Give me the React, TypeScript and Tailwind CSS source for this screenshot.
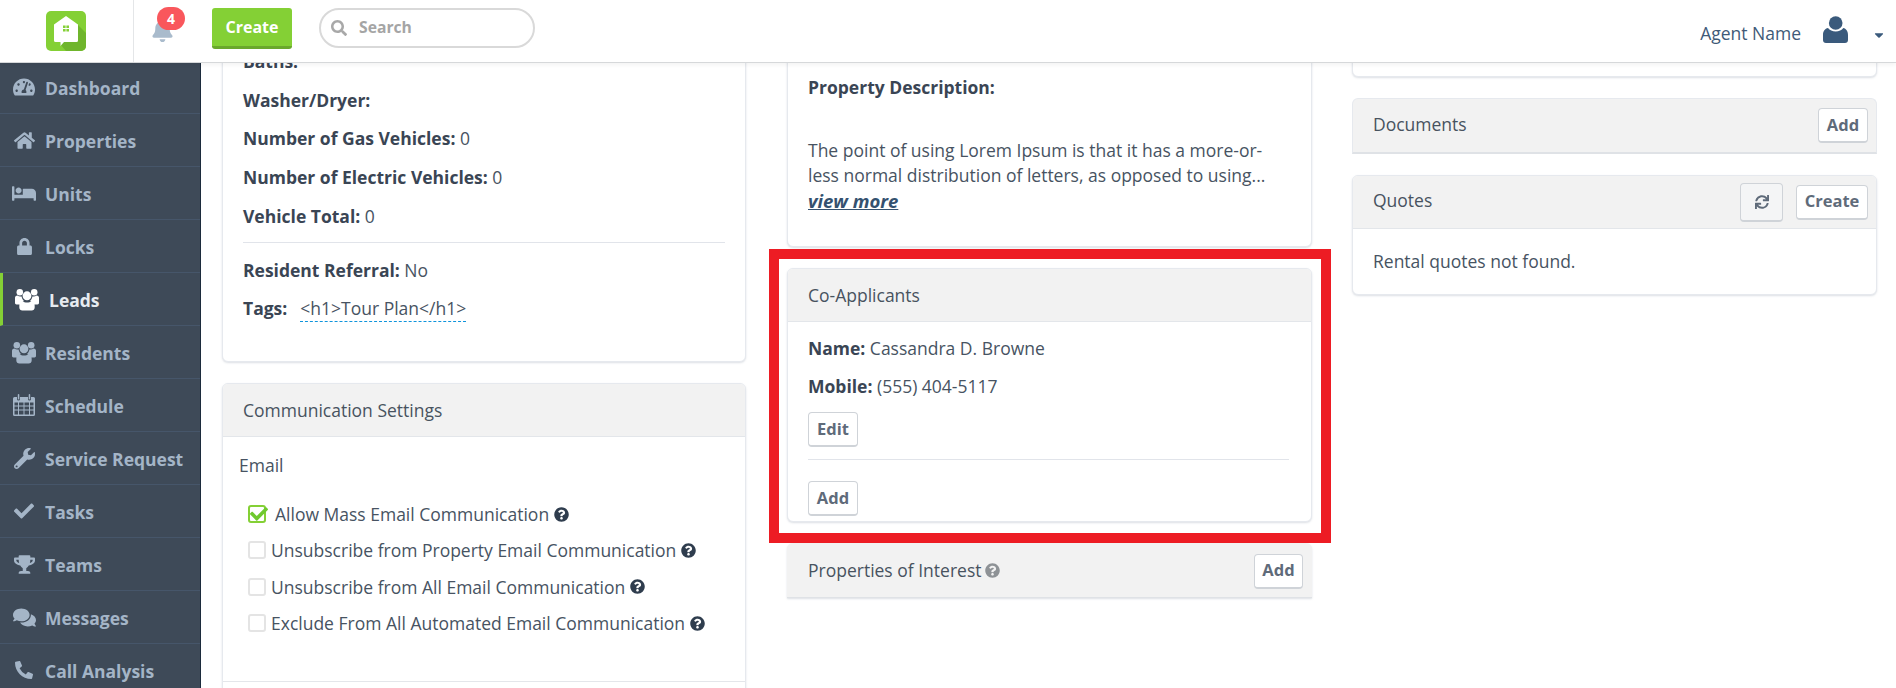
import React from "react";
import {
  FaTachometerAlt, FaHome, FaBed, FaLock, FaWrench, FaCheck, FaTrophy, FaComments,
  FaPhoneAlt, FaBell, FaSearch, FaCaretDown, FaQuestionCircle, FaSync,
} from "react-icons/fa";

function UsersIcon({ size = 25 }: { size?: number; className?: string }) {
  return (
    <svg width={size} height={size * 0.92} viewBox="0 0 25 23" fill="currentColor">
      <circle cx="5" cy="4" r="3.4" />
      <circle cx="20" cy="4" r="3.4" />
      <path d="M0 9.5 a2.5 2.5 0 0 1 2.5-2.2 c1 .8 2 1.2 3 1.2 .6 0 1 0 1.4-.1 .2 2 1.2 3.6 2.6 4.7 -2 .6-3.3 2-3.8 3.6 H1.6 C.6 16.7 0 16 0 15 Z" />
      <path d="M25 9.5 a2.5 2.5 0 0 0 -2.5-2.2 c-1 .8-2 1.2-3 1.2 -.6 0-1 0-1.4-.1 -.2 2-1.2 3.6-2.6 4.7 2 .6 3.3 2 3.8 3.6 h4.1 c1 0 1.6-.7 1.6-1.7 Z" />
      <circle cx="12.5" cy="7.6" r="4.6" />
      <path d="M7.8 13 c1.2 1 2.9 1.6 4.7 1.6 s3.5-.6 4.7-1.6 c2.3.4 3.3 2.4 3.3 5 v1.8 c0 2-1.4 3.2-3.1 3.2 H7.6 C5.9 23 4.5 21.8 4.5 19.8 V18 c0-2.6 1-4.6 3.3-5 Z" />
    </svg>
  );
}

function CalendarIcon({ size = 22 }: { size?: number; className?: string }) {
  return (
    <svg width={size} height={size} viewBox="0 0 22 22" fill="currentColor">
      <path fillRule="evenodd" d="M1.5 3 H4 V5 a1.5 1.5 0 0 0 3 0 V3 h8 v2 a1.5 1.5 0 0 0 3 0 V3 h2.5 A1.5 1.5 0 0 1 22 4.5 V20.5 A1.5 1.5 0 0 1 20.5 22 H1.5 A1.5 1.5 0 0 1 0 20.5 V4.5 A1.5 1.5 0 0 1 1.5 3 Z M1.5 8.5 v3 h3.5 v-3 Z M6 8.5 v3 h4.5 v-3 Z M11.5 8.5 v3 h4.5 v-3 Z M17 8.5 v3 h3.5 v-3 Z M1.5 12.5 v3 h3.5 v-3 Z M6 12.5 v3 h4.5 v-3 Z M11.5 12.5 v3 h4.5 v-3 Z M17 12.5 v3 h3.5 v-3 Z M1.5 16.5 v4 h3.5 v-4 Z M6 16.5 v4 h4.5 v-4 Z M11.5 16.5 v4 h4.5 v-4 Z M17 16.5 v4 h3.5 v-4 Z" />
      <rect x="4.8" y="0" width="1.5" height="5.5" rx=".75" />
      <rect x="15.7" y="0" width="1.5" height="5.5" rx=".75" />
    </svg>
  );
}

function UserIcon() {
  return (
    <svg width="25" height="27" viewBox="0 0 25 27" fill="#3a5a7c">
      <circle cx="12.7" cy="7" r="6.8" />
      <path d="M5 12 c1.6 2.2 4.5 3.6 7.7 3.6 S18.8 14.2 20.3 12 C23 12.5 25 15 25 19 v5 c0 1.8-1.2 3-3 3 H3 c-1.8 0-3-1.2-3-3 v-5 c0-4 2-6.5 5-7 Z" />
    </svg>
  );
}

const nav: { label: string; Icon: React.ComponentType<{ size?: number; className?: string }>; size: number; active?: boolean }[] = [
  { label: "Dashboard", Icon: FaTachometerAlt, size: 22 },
  { label: "Properties", Icon: FaHome, size: 21 },
  { label: "Units", Icon: FaBed, size: 25 },
  { label: "Locks", Icon: FaLock, size: 17 },
  { label: "Leads", Icon: UsersIcon, size: 25, active: true },
  { label: "Residents", Icon: UsersIcon, size: 25 },
  { label: "Schedule", Icon: CalendarIcon, size: 22 },
  { label: "Service Request", Icon: FaWrench, size: 21 },
  { label: "Tasks", Icon: FaCheck, size: 20 },
  { label: "Teams", Icon: FaTrophy, size: 21 },
  { label: "Messages", Icon: FaComments, size: 23 },
  { label: "Call Analysis", Icon: FaPhoneAlt, size: 18 },
];

function Logo() {
  return (
    <svg width="40" height="40" viewBox="0 0 40 40">
      <rect width="40" height="40" rx="5" fill="#84d035" />
      <path d="M30 12 L40 22 V35 a5 5 0 0 1 -5 5 H20 L14 33 Z" fill="#6fb52c" />
      <path d="M20 5 L32 13.5 V29.5 a1.5 1.5 0 0 1 -1.5 1.5 H18 L14.5 35 V31 H9.5 A1.5 1.5 0 0 1 8 29.5 V13.5 Z" fill="#ffffff" />
      <path d="M17 14.5 h2.6 v2.6 h-2.6 z M20.4 14.5 h2.6 v2.6 h-2.6 z M17 18 h2.6 v2.6 h-2.6 z M20.4 18 h2.6 v2.6 h-2.6 z" fill="#84d035" />
    </svg>
  );
}

function Btn({ children, className = "" }: { children: React.ReactNode; className?: string }) {
  return (
    <button className={"flex h-[35px] items-center justify-center rounded-[4px] border border-[#cfd3d8] border-b-2 bg-white text-[16.5px] font-bold text-[#5f6b7a] " + className}>
      {children}
    </button>
  );
}

function Head({ children, right }: { children: React.ReactNode; right?: React.ReactNode }) {
  return (
    <div className="flex h-[53px] items-center justify-between border-b border-[#e3e6ea] bg-[#f2f2f2] pl-[20px] text-[#48535f]">
      <div className="flex items-center gap-[4px]">{children}</div>
      {right}
    </div>
  );
}

function Row({ label, value, className = "" }: { label: string; value?: string; className?: string }) {
  return (
    <div className={"mb-[14.67px] h-[24px] leading-[24px] whitespace-nowrap " + className}>
      <span className="font-bold text-[#3a4554]">{label}</span>
      {value ? " " + value : ""}
    </div>
  );
}

function Check({ label, checked }: { label: string; checked?: boolean }) {
  return (
    <div className="mb-[12.4px] flex h-[24px] items-center whitespace-nowrap pl-[25px]">
      {checked ? (
        <span className="relative mr-[9px] h-[18px] w-[18px] rounded-[3px] border-2 border-[#84d035] bg-white">
          <FaCheck className="absolute left-[0px] top-[-2px] text-[#6fc92f]" size={18} />
        </span>
      ) : (
        <span className="mr-[5px] h-[18px] w-[18px] rounded-[3px] border-2 border-[#e4e4e4] bg-white" />
      )}
      <span>{label}</span>
      <FaQuestionCircle className="ml-[5px] text-[#2f3d4e]" size={15} />
    </div>
  );
}

const card = "rounded-[6px] border border-[#e6e9ee] bg-white shadow-[0_1px_2px_rgba(120,130,150,0.25)] overflow-hidden";

export default function App() {
  return (
    <div className="flex h-[688px] flex-col overflow-hidden bg-white font-['Open_Sans',sans-serif] text-[17.5px] text-[#475362]">
      <header className="relative z-20 flex h-[63px] shrink-0 items-start border-b border-[#d6d8da] bg-white shadow-[0_2px_4px_rgba(0,0,0,0.05)]">
        <div className="flex h-full w-[134px] items-center border-r border-[#e4e6e8] pl-[46px]">
          <Logo />
        </div>
        <div className="relative ml-[18px] mt-[10px] h-[40px] w-[60px]">
          <FaBell className="absolute left-[-1px] top-[9px] text-[#a9bbcc]" size={23} />
          <span className="absolute left-[5px] top-[-3px] flex h-[23px] w-[28px] items-center justify-center rounded-full bg-[#f9575c] text-[14px] font-bold text-white">4</span>
        </div>
        <button className="mt-[8px] flex h-[41px] w-[80px] items-center justify-center rounded-[3px] border-b-[3px] border-[#6aa82c] bg-[#84d035] text-[16px] font-bold text-white">Create</button>
        <div className="ml-[27px] mt-[8px] flex h-[40px] w-[216px] items-center rounded-full border-2 border-[#d9d9d9] pl-[10px]">
          <FaSearch className="text-[#a8a8a8]" size={16} />
          <span className="ml-[12px] text-[15.7px] font-bold text-[#a5a5a5]">Search</span>
        </div>
        <div className="ml-auto mt-[16px] flex items-start pr-[10px]">
          <span className="mt-[4px] text-[#3f5a78]">Agent Name</span>
          <span className="ml-[22px]"><UserIcon /></span>
          <FaCaretDown className="ml-[24px] mt-[12px] text-[#3a5a7c]" size={14} />
        </div>
      </header>

      <div className="flex min-h-0 flex-1">
        <nav className="-mt-[2px] w-[201px] shrink-0 border-r border-[#1c2b3c] bg-[#3e4a58]">
          {nav.map(({ label, Icon, size, active }) => (
            <div key={label} className={"flex h-[53px] items-center border-b border-[#46566a] " + (active ? "border-l-[3px] border-l-[#84d035] pl-[12px] text-white" : "pl-[12px] text-[#a4b5c7]")}>
              <span className="flex w-[33px] shrink-0 justify-start">
                <span className="flex w-[24px] justify-center">
                  <Icon size={size} className={active ? "text-[#e4e9ee]" : ""} />
                </span>
              </span>
              <span className={"pt-[3px] text-[17.5px] font-bold " + (active ? "ml-[1px] text-[#e6ebf0]" : "")}>{label}</span>
            </div>
          ))}
        </nav>

        <main className="relative -mt-[1px] grid flex-1 grid-cols-3 items-start">
          <section className="pl-[21px] pr-[20px]">
            <div className={card + " -mt-[40px] h-[340px] px-[20px] pt-[26px]"}>
              <Row label="Baths:" />
              <Row label="Washer/Dryer:" />
              <Row label="Number of Gas Vehicles:" value="0" />
              <Row label="Number of Electric Vehicles:" value="0" />
              <Row label="Vehicle Total:" value="0" className="mb-[14px]" />
              <div className="mb-[15px] border-t border-[#e1e4ea]" />
              <Row label="Resident Referral:" value="No" className="mb-[14px]" />
              <div className="h-[24px] leading-[24px]">
                <span className="font-bold text-[#3a4554]">Tags:</span>
                <span className="ml-[13px] border-b border-dashed border-[#0f94dc] pb-[1px]">&lt;h1&gt;Tour Plan&lt;/h1&gt;</span>
              </div>
            </div>
            <div className={card + " mt-[21px] h-[400px]"}>
              <Head>Communication Settings</Head>
              <div className="h-[245px] border-b border-[#e4e6ea] pl-[16px] pt-[16px]">
                <div className="mb-[25px] h-[24px] leading-[24px]">Email</div>
                <div className="-ml-[16px]">
                  <Check label="Allow Mass Email Communication" checked />
                  <Check label="Unsubscribe from Property Email Communication" />
                  <Check label="Unsubscribe from All Email Communication" />
                  <Check label="Exclude From All Automated Email Communication" />
                </div>
              </div>
            </div>
          </section>

          <section className="pl-[21px] pr-[19px]">
            <div className={card + " -mt-[40px] h-[225px] px-[20px] pt-[52px]"}>
              <div className="h-[24px] font-bold leading-[24px] text-[#3a4554]">Property Description:</div>
              <p className="mt-[39px] leading-[25px]">
                The point of using Lorem Ipsum is that it has a more-or-less normal distribution of letters, as opposed to using...{" "}
                <span className="text-[18.5px] font-bold italic text-[#34516f] underline">view more</span>
              </p>
            </div>
            <div className={card + " mt-[21px] h-[254px]"}>
              <Head>Co-Applicants</Head>
              <div className="px-[20px] pt-[14px]">
                <Row label="Name:" value="Cassandra D. Browne" className="mb-[14px]" />
                <Row label="Mobile:" value="(555) 404-5117" className="mb-[14px]" />
                <Btn className="w-[50px]">Edit</Btn>
                <div className="mb-[21px] mr-[2px] mt-[12px] border-t border-[#e1e4ea]" />
                <Btn className="w-[50px]">Add</Btn>
              </div>
            </div>
            <div className="mt-[21px] rounded-t-[6px] border-b border-[#dfe2e6] bg-[#f2f2f2] shadow-[0_1px_2px_rgba(120,130,150,0.25)]">
              <div className="flex h-[54px] items-center justify-between pl-[21px] pr-[9px]">
                <div className="flex items-center gap-[4px] text-[#48535f]">
                  Properties of Interest <FaQuestionCircle className="text-[#8e9296]" size={15} />
                </div>
                <Btn className="mt-[2px] w-[49px]">Add</Btn>
              </div>
            </div>
          </section>

          <section className="pl-[21px] pr-[19px]">
            <div className={card + " -mt-[40px] h-[55px]"} />
            <div className="mt-[21px] rounded-t-[6px] border border-b-2 border-[#e6e9ee] border-b-[#dfe2e6] bg-[#f2f2f2]">
              <div className="flex h-[53px] items-center justify-between pl-[20px] pr-[8px] text-[#48535f]">
                <span className="-mt-[2px]">Documents</span>
                <Btn className="w-[50px]">Add</Btn>
              </div>
            </div>
            <div className={card + " mt-[21px] h-[120px]"}>
              <Head
                right={
                  <div className="flex items-center pr-[8px]">
                    <Btn className="mr-[13px] h-[39px] w-[43px] !bg-[#f4f5f6]">
                      <FaSync size={14} />
                    </Btn>
                    <Btn className="w-[72px]">Create</Btn>
                  </div>
                }
              >
                <span className="-mt-[3px]">Quotes</span>
              </Head>
              <div className="pl-[20px] pt-[20px] leading-[24px]">Rental quotes not found.</div>
            </div>
          </section>

          <div className="absolute left-[568px] top-[187px] h-[294px] w-[562px] border-[10px] border-[#ed1c24]" />
        </main>
      </div>
    </div>
  );
}
